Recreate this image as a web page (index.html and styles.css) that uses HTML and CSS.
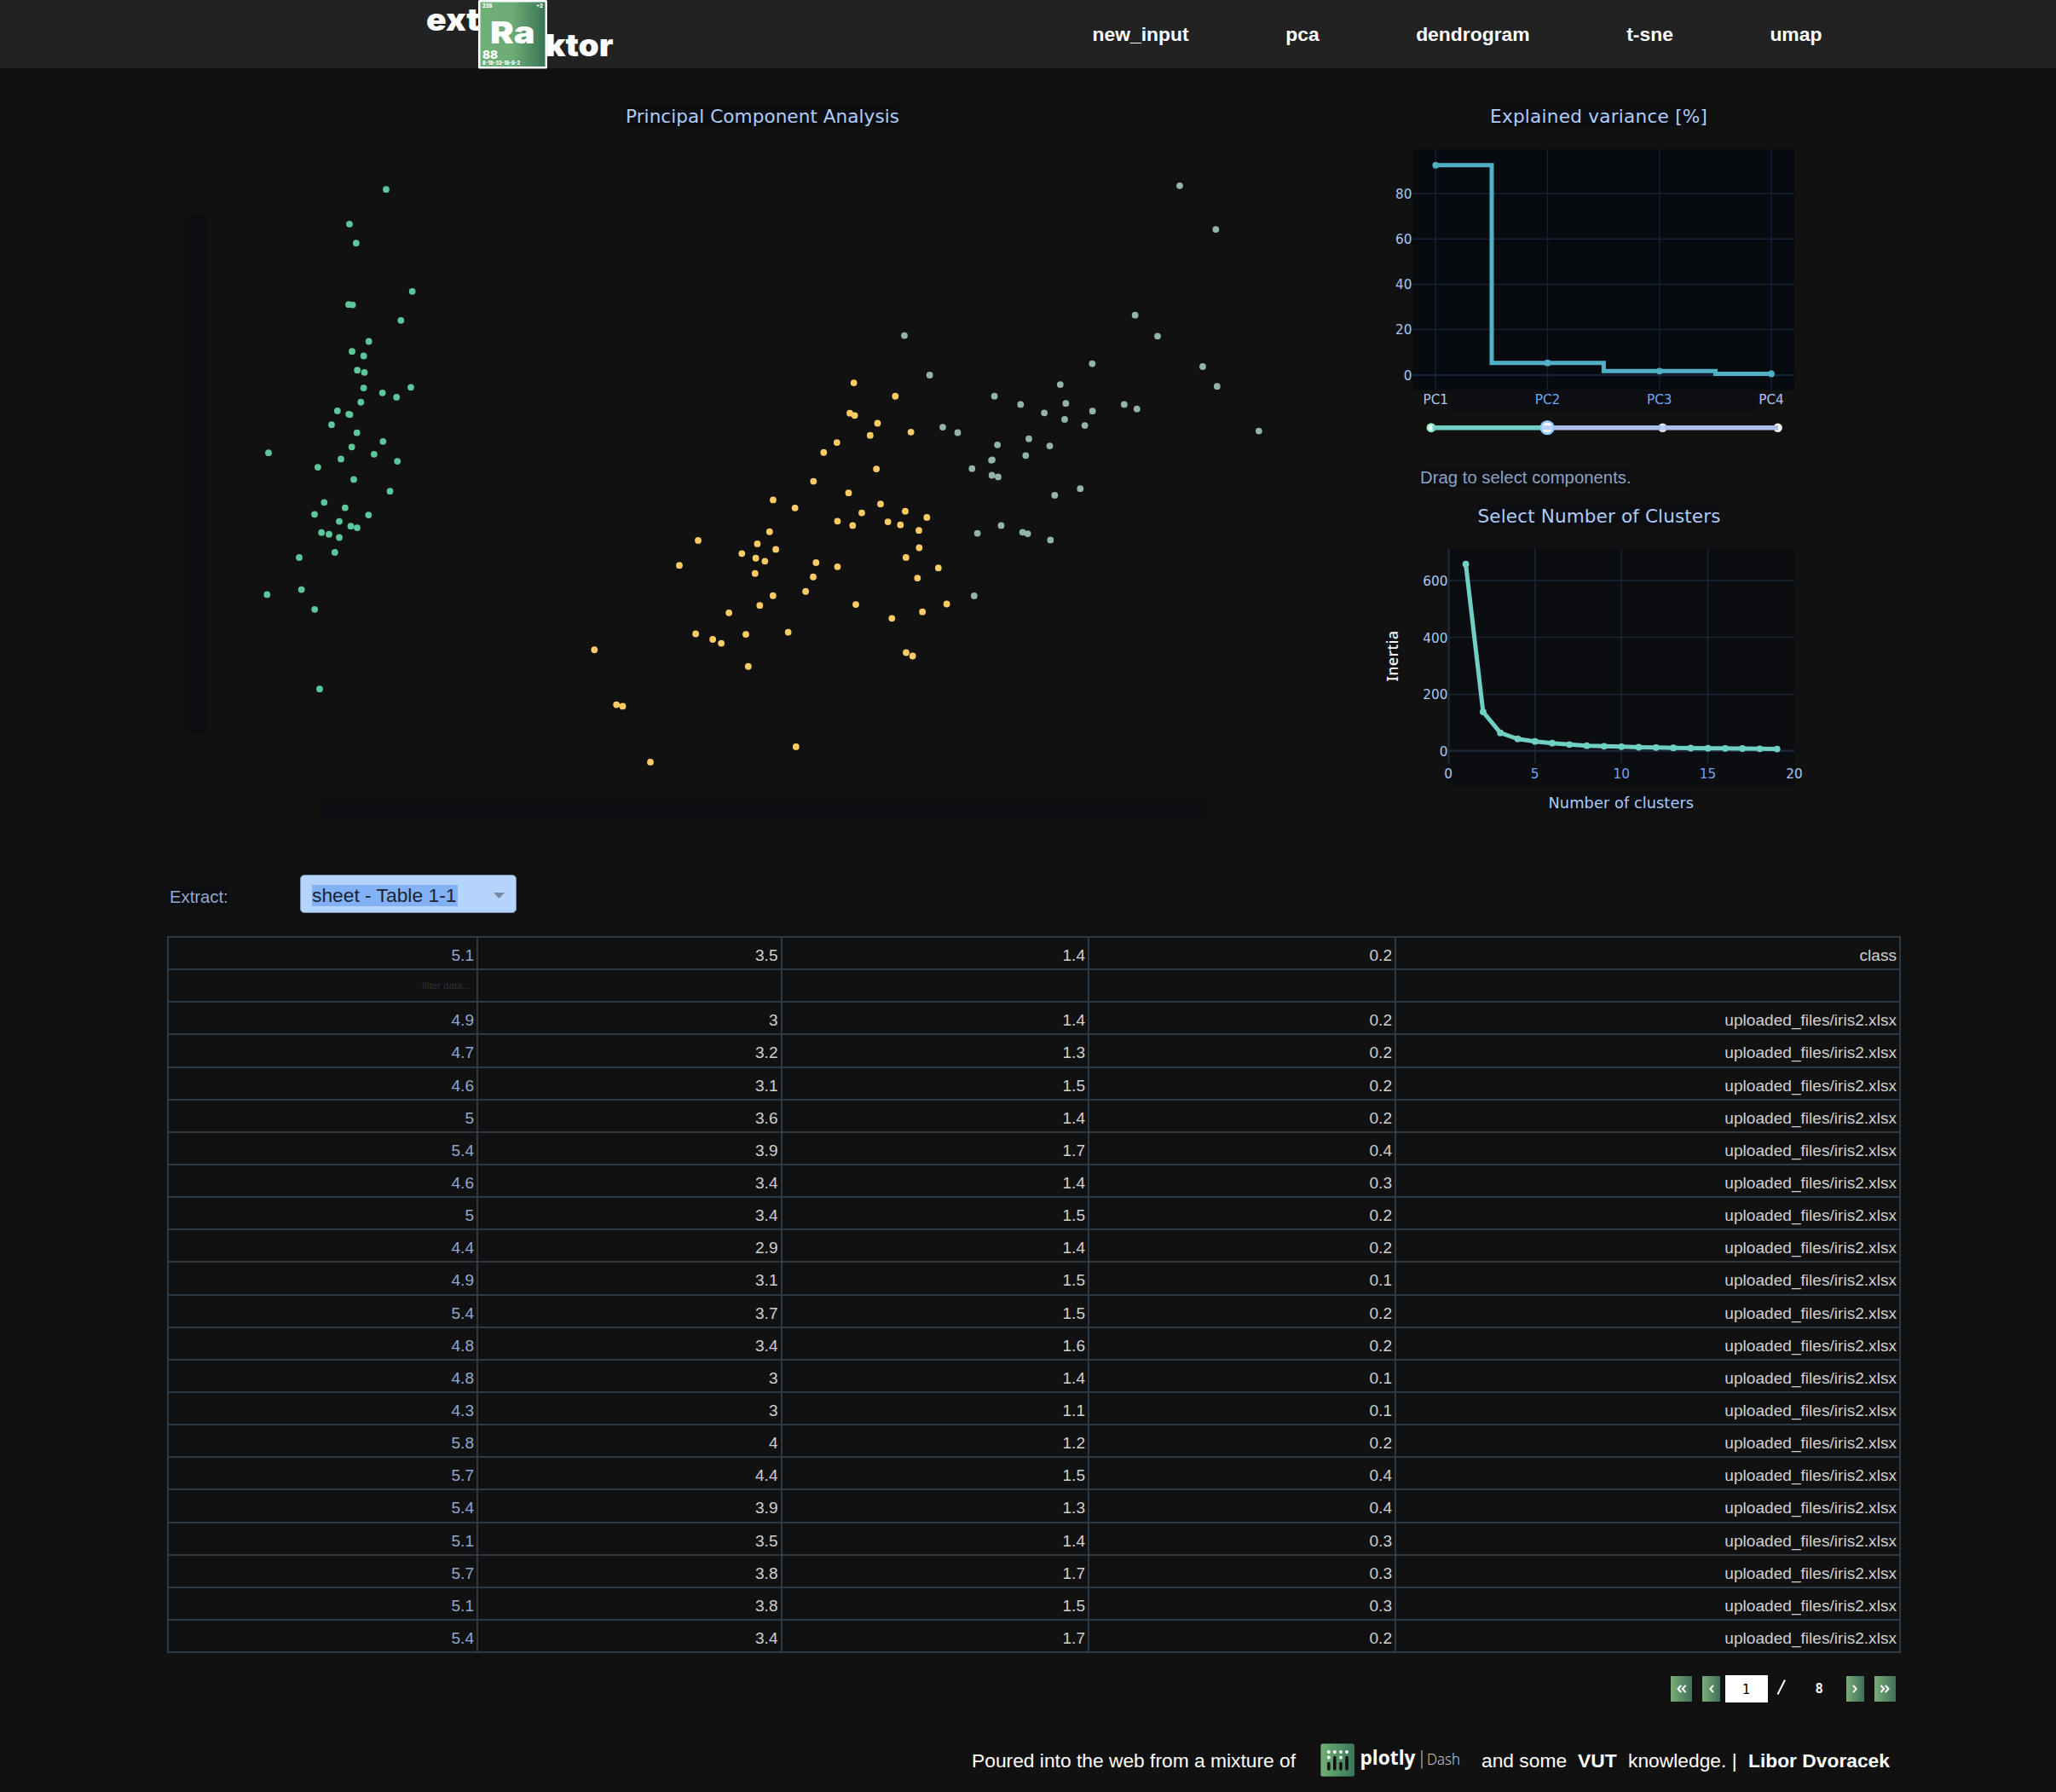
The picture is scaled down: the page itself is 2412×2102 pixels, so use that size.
FILE: index.html
```html
<!DOCTYPE html>
<html lang="en">
<head>
<meta charset="utf-8">
<title>extRaktor – pca</title>
<link rel="stylesheet" href="styles.css">
</head>
<body>
<header class="topbar">
  <svg class="brand" viewBox="496 0 228 80" width="228" height="80" role="img" aria-label="extRaktor">
    <defs>
      <linearGradient id="tile" x1="0" y1="0" x2="1" y2="0">
        <stop offset="0" stop-color="#70b078"/><stop offset=".5" stop-color="#6cab75"/><stop offset="1" stop-color="#3a7556"/>
      </linearGradient>
    </defs>
    <g class="brand-word">
      <text x="500" y="35.500" font-size="36.500" textLength="63" lengthAdjust="spacingAndGlyphs">ext</text>
      <text x="640" y="66" font-size="36" textLength="79.500" lengthAdjust="spacingAndGlyphs">ktor</text>
    </g>
    <rect x="561" y="0" width="81" height="80.500" rx="1.500" fill="#fff"/>
    <rect x="563.500" y="2.500" width="76" height="75.500" fill="url(#tile)"/>
    <g class="brand-word">
      <text x="575" y="50.700" font-size="36" textLength="52.500" lengthAdjust="spacingAndGlyphs">Ra</text>
      <text x="566" y="68.700" font-size="13" textLength="18" lengthAdjust="spacingAndGlyphs">88</text>
      <text x="566" y="75.600" font-size="6" textLength="44" lengthAdjust="spacingAndGlyphs">8-18-32-18-8-2</text>
      <text x="566" y="9.300" font-size="6" textLength="11.500" lengthAdjust="spacingAndGlyphs">226</text>
      <text x="629" y="9.300" font-size="6" textLength="8" lengthAdjust="spacingAndGlyphs">+2</text>
    </g>
  </svg>
  <nav class="menu">
    <a>new_input</a><a>pca</a><a>dendrogram</a><a>t-sne</a><a>umap</a>
  </nav>
</header>

<main>
  <section class="charts">
    <svg class="scatter" viewBox="200 100 1400 880" width="1400" height="880">
      <rect class="band" x="218" y="251" width="25" height="609"/>
      <rect class="band" x="374" y="938" width="1041" height="24"/>
      <rect class="band" x="735" y="123" width="320" height="26"/>
      <text class="title" x="734" y="143.700" textLength="321">Principal Component Analysis</text>
      <path class="dots c0" transform="translate(200 100) scale(.33333 .4847)" d="M759 252h0M630 336h0M653.500 382h0M851 499h0M627 530.500h0M641 531.500h0M811 569h0M698 620h0M639 644h0M680 655h0M657.500 689.500h0M682.500 695h0M680 732.500h0M746 744.500h0M795.500 755h0M846 731h0M670 767h0M587.500 788h0M627.500 796h0M631.500 797h0M567 821.500h0M656 841h0M748 862h0M638 875.500h0M716.500 893h0M345 889.500h0M600 904.500h0M798.500 910h0M518.500 924.500h0M645 954h0M772.500 982.500h0M541 1009.500h0M614.500 1022.500h0M507 1038.500h0M697 1040h0M594 1055.500h0M634.500 1067h0M657 1071h0M531.500 1082.500h0M558 1086.500h0M594 1094.500h0M578.500 1130.500h0M453 1143h0M461 1220.500h0M340 1232.500h0M507.500 1268.500h0M525 1461h0"/>
      <path class="dots c1" transform="translate(660 340) scale(.33333 .38265)" d="M1025 285h0M1171 326h0M1011 378h0M1028 385h0M1108.500 409h0M1082.500 446h0M1226 436h0M965.500 468h0M919 498.500h0M1104.500 549h0M883 587h0M1006.500 622.500h0M741 644h0M818 668.500h0M1119 656.500h0M1206 678.500h0M1053 683.500h0M1282 697.500h0M967.500 709h0M1021 722.500h0M1145 711h0M1189 720.500h0M1254 737.500h0M728.500 741.500h0M477 768h0M685.500 778.500h0M750.500 795.500h0M631 808.500h0M680 822.500h0M712 832h0M1255 790.500h0M1208.500 820.500h0M411 844.500h0M892 836h0M967.500 849h0M1322.500 852.500h0M677.500 869.500h0M882 880h0M1249 883.500h0M855.500 924.500h0M740.500 937.500h0M694 967.500h0M1032 964.500h0M1352 963h0M1266.500 987h0M585.500 990h0M1159 1007h0M794 1049.500h0M468.500 1054.500h0M645 1056h0M528.500 1071.500h0M558.500 1083.500h0M112 1103.500h0M1209 1112h0M1232 1122.500h0M653.500 1154.500h0M189.500 1271.500h0M211.500 1276.500h0M821.500 1400.500h0M309 1447.500h0"/>
      <path class="dots c2" transform="translate(1040 180) scale(.33333 .35714)" d="M1032 106h0M1159 249.500h0M875 531h0M63 598h0M954 600h0M724 690.500h0M1113 700h0M152 728h0M611.500 759h0M1163.500 765h0M380 797h0M472 824.500h0M631 821h0M836.500 824.500h0M881.500 839h0M555.500 852h0M725 846h0M627 873.500h0M698 893.500h0M198 899h0M250.500 917h0M1310.500 911.500h0M501 937h0M390.500 957h0M574.500 960.500h0M490 992h0M369.500 1007.500h0M372 1006h0M301 1035h0M371 1057h0M393 1062.500h0M682 1101h0M592 1122.500h0M403.500 1222h0M320 1247.500h0M479 1244h0M497 1249h0M577 1269.500h0M308.500 1453h0"/>
    </svg>

    <div class="side">
      <svg viewBox="1600 100 560 390" width="560" height="390">
        <rect class="band" x="1749" y="122.500" width="253.500" height="26"/>
        <text class="title" x="1748" y="143.700" textLength="255">Explained variance [%]</text>
        <rect x="1657" y="175" width="448.500" height="282.500" fill="#070a0e"/>
        <rect class="band" x="1702" y="457.500" width="359" height="25"/>
        <path class="grid-a" d="M1684.300 175V457M1815.500 175V457M1946.800 175V457M2078 175V457M1657 227H2105M1657 280.300H2105M1657 333.500H2105M1657 386.500H2105"/>
        <path class="grid-a thick" d="M1657 440H2105"/>
        <path class="line-a" d="M1684.300 193.800H1750V425.700H1881.400V435.300H2012.500V438.500H2078"/>
        <path class="dots mark-a" d="M1684.300 193.800h0M1815.500 425.700h0M1946.800 435.300h0M2078 438.500h0"/>
        <g class="tick end">
          <text x="1656.500" y="232.900">80</text><text x="1656.500" y="286.100">60</text><text x="1656.500" y="339.200">40</text><text x="1656.500" y="392.200">20</text><text x="1656.500" y="445.800">0</text>
        </g>
        <g class="tick mid">
          <text x="1684.300" y="473.700">PC1</text><text class="deep" x="1815.500" y="473.700">PC2</text><text class="deep" x="1946.800" y="473.700">PC3</text><text x="2078" y="473.700">PC4</text>
        </g>
      </svg>

      <svg viewBox="1600 490 560 40" width="560" height="40">
        <circle cx="1679" cy="501.700" r="4.200" fill="#fff" stroke="#8ff0c0" stroke-width="2.500"/>
        <circle cx="1950.500" cy="501.700" r="5.200" fill="#e6e8ee"/>
        <circle cx="2085.700" cy="501.700" r="5.200" fill="#f4f2f0"/>
        <path d="M1815 501.700H2086" stroke="#a9c1e8" stroke-width="5.600"/>
        <path d="M1680.500 501.700H1815" stroke="#70d0c4" stroke-width="5.600"/>
        <circle cx="1950.500" cy="501.700" r="2.600" fill="#b9d0f8"/>
        <circle cx="1815.200" cy="501.700" r="7.400" fill="#fff" stroke="#92caf9" stroke-width="2.500"/>
        <path d="M1809.500 501.700H1821" stroke="#b5d3fb" stroke-width="5.200"/>
      </svg>

      <p class="hint"><span>Drag to select components.</span></p>

      <svg viewBox="1600 580 560 400" width="560" height="400">
        <rect class="band" x="1734.500" y="591" width="283" height="26"/>
        <text class="title" x="1733.500" y="612.700" textLength="285">Select Number of Clusters</text>
        <rect x="1698" y="643.500" width="408" height="278" fill="#0b0d11"/>
        <path class="grid-b" d="M1800.700 644V896M1902.200 644V896M2003.500 644V896M1699 681H2105M1699 747.500H2105M1699 814.500H2105"/>
        <path class="grid-b thick" d="M1699.500 644V896M1699 880.700H2105"/>
        <polyline class="line-b" points="1719.600,661.700 1739.900,835 1760.200,859.700 1780.500,866.700 1800.800,869.700 1821,871.700 1841.300,873.300 1861.600,874.700 1881.900,875.300 1902.200,875.800 1922.500,876.500 1942.800,876.800 1963.100,877.200 1983.400,877.500 2003.700,877.700 2024,877.800 2044.200,878 2064.500,878.300 2084.800,878.600"/>
        <path class="dots mark-b" d="M1719.600 661.700h0M1739.900 835h0M1760.200 859.700h0M1780.500 866.700h0M1800.800 869.700h0M1821 871.700h0M1841.300 873.300h0M1861.600 874.700h0M1881.900 875.300h0M1902.200 875.800h0M1922.500 876.500h0M1942.800 876.800h0M1963.100 877.200h0M1983.400 877.500h0M2003.700 877.700h0M2024 877.800h0M2044.200 878h0M2064.500 878.300h0M2084.800 878.600h0"/>
        <g class="tick end">
          <text x="1698.500" y="687">600</text><text x="1698.500" y="753.500">400</text><text x="1698.500" y="820.200">200</text><text x="1698.500" y="887">0</text>
        </g>
        <g class="tick mid">
          <text x="1699" y="912.700">0</text><text class="deep" x="1800.700" y="912.700">5</text><text class="deep" x="1902.200" y="912.700">10</text><text class="deep" x="2003.500" y="912.700">15</text><text x="2105" y="912.700">20</text>
        </g>
        <rect class="band" x="1817.500" y="929" width="169.500" height="22"/>
        <text class="axis" x="1816.500" y="947.700" textLength="170.500">Number of clusters</text>
        <text class="axis inertia" transform="translate(1640 799.500) rotate(-90)" textLength="59.500">Inertia</text>
      </svg>
    </div>
  </section>

  <div class="extract">
    <label><span>Extract:</span></label>
    <div class="select">
      <span class="value">sheet - Table 1-1</span>
      <svg width="13" height="7" viewBox="0 0 13 7"><path d="M0 0h13L6.500 7z" fill="#75889f"/></svg>
    </div>
  </div>

  <section class="table">
    <b>5.1</b><i>3.5</i><i>1.4</i><i>0.2</i><i>class</i>
    <b class="filter"><span>filter data...</span></b><i></i><i></i><i></i><i></i>
    <b>4.9</b><i>3</i><i>1.4</i><i>0.2</i><i>uploaded_files/iris2.xlsx</i>
    <b>4.7</b><i>3.2</i><i>1.3</i><i>0.2</i><i>uploaded_files/iris2.xlsx</i>
    <b>4.6</b><i>3.1</i><i>1.5</i><i>0.2</i><i>uploaded_files/iris2.xlsx</i>
    <b>5</b><i>3.6</i><i>1.4</i><i>0.2</i><i>uploaded_files/iris2.xlsx</i>
    <b>5.4</b><i>3.9</i><i>1.7</i><i>0.4</i><i>uploaded_files/iris2.xlsx</i>
    <b>4.6</b><i>3.4</i><i>1.4</i><i>0.3</i><i>uploaded_files/iris2.xlsx</i>
    <b>5</b><i>3.4</i><i>1.5</i><i>0.2</i><i>uploaded_files/iris2.xlsx</i>
    <b>4.4</b><i>2.9</i><i>1.4</i><i>0.2</i><i>uploaded_files/iris2.xlsx</i>
    <b>4.9</b><i>3.1</i><i>1.5</i><i>0.1</i><i>uploaded_files/iris2.xlsx</i>
    <b>5.4</b><i>3.7</i><i>1.5</i><i>0.2</i><i>uploaded_files/iris2.xlsx</i>
    <b>4.8</b><i>3.4</i><i>1.6</i><i>0.2</i><i>uploaded_files/iris2.xlsx</i>
    <b>4.8</b><i>3</i><i>1.4</i><i>0.1</i><i>uploaded_files/iris2.xlsx</i>
    <b>4.3</b><i>3</i><i>1.1</i><i>0.1</i><i>uploaded_files/iris2.xlsx</i>
    <b>5.8</b><i>4</i><i>1.2</i><i>0.2</i><i>uploaded_files/iris2.xlsx</i>
    <b>5.7</b><i>4.4</i><i>1.5</i><i>0.4</i><i>uploaded_files/iris2.xlsx</i>
    <b>5.4</b><i>3.9</i><i>1.3</i><i>0.4</i><i>uploaded_files/iris2.xlsx</i>
    <b>5.1</b><i>3.5</i><i>1.4</i><i>0.3</i><i>uploaded_files/iris2.xlsx</i>
    <b>5.7</b><i>3.8</i><i>1.7</i><i>0.3</i><i>uploaded_files/iris2.xlsx</i>
    <b>5.1</b><i>3.8</i><i>1.5</i><i>0.3</i><i>uploaded_files/iris2.xlsx</i>
    <b>5.4</b><i>3.4</i><i>1.7</i><i>0.2</i><i>uploaded_files/iris2.xlsx</i>
  </section>

  <div class="pager">
    <button class="wide"><svg viewBox="0 0 12 10" width="12" height="10"><path d="M5.200 1L1.500 5l3.700 4M10.500 1L6.800 5l3.700 4"/></svg></button>
    <button class="prev"><svg viewBox="0 0 6 10" width="6" height="10"><path d="M5 1L1.300 5 5 9"/></svg></button>
    <span class="page">1</span>
    <span class="slash"><svg viewBox="0 0 12 20" width="12" height="20"><path d="M10 1.500L1.500 18.500"/></svg></span>
    <span class="total">8</span>
    <button class="next"><svg viewBox="0 0 6 10" width="6" height="10"><path d="M1 1l3.700 4L1 9"/></svg></button>
    <button class="wide"><svg viewBox="0 0 12 10" width="12" height="10"><path d="M1.500 1l3.700 4-3.700 4M6.800 1l3.700 4-3.700 4"/></svg></button>
  </div>
</main>

<footer class="foot">
  <span class="poured">Poured into the web from a mixture of</span>
  <svg class="plotly" viewBox="1549 2046 166 40" width="166" height="40" role="img" aria-label="plotly Dash">
    <defs><linearGradient id="pl" x1="0" y1="0" x2="1" y2="0"><stop offset="0" stop-color="#6fb174"/><stop offset="1" stop-color="#3a7658"/></linearGradient></defs>
    <rect x="1549.400" y="2046.300" width="39.600" height="38.400" rx="2.500" fill="url(#pl)"/>
    <path d="M1558.800 2056h0M1565.800 2056h0M1573 2056h0M1580 2056h0M1558.800 2062.500h0M1573 2062.500h0" stroke="#fff" stroke-width="4" stroke-linecap="round"/>
    <path d="M1558.800 2069.500v6.500M1565.800 2062.500v13.500M1573 2069.500v6.500M1580 2062.500v13.500" stroke="#111" stroke-width="3.600" stroke-linecap="round"/>
    <text class="pl-name" x="1595.500" y="2071" textLength="65" lengthAdjust="spacingAndGlyphs">plotly</text>
    <path d="M1668 2054v21.500" stroke="#aaa" stroke-width="1.300"/>
    <text class="pl-dash" x="1674" y="2070.500" textLength="39" lengthAdjust="spacingAndGlyphs">Dash</text>
  </svg>
  <span class="some">and some</span>
  <strong class="vut">VUT</strong>
  <span class="know">knowledge. |</span>
  <strong>Libor Dvoracek</strong>
</footer>
</body>
</html>
```

FILE: styles.css
```css
* { box-sizing: border-box; }
body {
  margin: 0;
  background: #111;
  color: #fff;
  font-family: "Liberation Sans", Arial, sans-serif;
}
svg { display: block; flex: none; }

.topbar {
  display: flex;
  height: 80px;
  padding-left: 496px;
  background: #222;
}
.brand { overflow: visible; }
.brand-word { font-family: Inter, sans-serif; font-weight: 900; fill: #fff; }
.menu {
  display: flex;
  gap: 113.500px;
  padding: 27px 0 0 557.500px;
  font-size: 22.900px;
  font-weight: bold;
  line-height: 26px;
}

.charts { display: flex; padding: 20px 0 0 200px; }
.band { fill: #0c0e12; }
.title, .tick, .axis { font-family: "DejaVu Sans", Verdana, sans-serif; }
.title { font-size: 21.600px; fill: #aecdf8; }
.tick { font-size: 15.300px; fill: #a9c7f0; }
.tick .deep { fill: #72a6ee; }
.end { text-anchor: end; }
.mid { text-anchor: middle; }
.axis { font-size: 17.800px; fill: #abccf8; }
.inertia { font-family: "Noto Sans", sans-serif; font-weight: 500; font-size: 18px; fill: #f4f7fa; }

.dots {
  fill: none;
  stroke-width: 7.800px;
  stroke-linecap: round;
  vector-effect: non-scaling-stroke;
}
.c0 { stroke: #5bc79b; }
.c1 { stroke: #fdcb64; }
.c2 { stroke: #93b5a7; }
.mark-a { stroke: #4fb0c6; }
.mark-b { stroke: #70d0c4; }
.grid-a, .grid-b { fill: none; stroke-width: 1.400px; }
.grid-a { stroke: #14213a; }
.grid-b { stroke: #1b283a; }
.thick { stroke-width: 2.600px; }
.line-a, .line-b { fill: none; stroke-width: 5px; }
.line-a { stroke: #4fb0c6; }
.line-b { stroke: #70d0c4; stroke-linejoin: round; }

.hint {
  height: 50px;
  margin: 0;
  padding: 19px 0 0 66px;
  font-size: 20.350px;
  line-height: 23px;
  color: #8ea3c0;
}
.hint span, .extract label span { background: #0c0e12; }

.extract {
  display: flex;
  height: 118px;
  padding: 46px 0 0 199px;
}
.extract label {
  width: 153px;
  padding-top: 14px;
  font-size: 20.300px;
  line-height: 24px;
  color: #93a9c9;
}
.select {
  display: flex;
  align-items: center;
  justify-content: space-between;
  width: 254px;
  height: 45px;
  padding: 3px 13px 0 13px;
  border: 1px solid #7c92ac;
  border-radius: 5px;
  background: #b5d4fb;
}
.value {
  padding-right: 2px;
  font-size: 22.800px;
  line-height: 25px;
  color: #1a2433;
  background: #82b1f6;
}

.table {
  display: grid;
  grid-template-columns: 363px 356.500px 360.500px 360px 592px;
  grid-auto-rows: 38.150px;
  width: 2034px;
  margin-left: 196px;
  border: solid #2e3946;
  border-width: 0 2px 2px 0;
  font-size: 19.100px;
}
.table b, .table i {
  padding: 10px 3px 0 0;
  border: solid #2e3946;
  border-width: 2px 0 0 2px;
  font-style: normal;
  font-weight: normal;
  line-height: 22px;
  text-align: right;
  color: #d0d0d0;
}
.table b { color: #8fa8cc; }
.table .filter { padding: 7px 7px 0 0; font-size: 11.500px; color: #2b3138; }

.pager {
  display: flex;
  align-items: center;
  height: 32px;
  margin: 26px 0 0 1960px;
  font-family: "DejaVu Sans Mono", monospace;
  font-size: 15.500px;
}
.pager button {
  display: flex;
  align-items: center;
  justify-content: center;
  width: 21px;
  height: 30px;
  padding: 0;
  border: 0;
  background: linear-gradient(90deg, #78ad76, #416f59);
}
.pager .wide { width: 25px; }
.pager path { fill: none; stroke: #fff; stroke-width: 2px; }
.prev { margin-left: 12px; }
.page {
  width: 50px;
  height: 32px;
  margin-left: 5.500px;
  line-height: 34px;
  text-align: center;
  color: #000;
  background: #fff;
}
.slash { margin: -4px 0 0 10px; }
.total { width: 10px; margin: 0 26px 0 34px; font-weight: bold; }
.next { margin-right: 12px; }

.foot {
  display: flex;
  align-items: center;
  height: 40px;
  margin: 48px 0 0 1140px;
  font-size: 22.800px;
  white-space: pre;
}
.foot > span, .foot > strong { margin-top: 1px; }
.poured { width: 409px; }
.some { margin-left: 23px; width: 113px; }
.vut { width: 59px; }
.know { width: 141px; }
.pl-name { font-family: "Open Sans", sans-serif; font-weight: 700; font-size: 23px; fill: #fff; }
.pl-dash { font-family: "Open Sans", sans-serif; font-weight: 300; font-size: 17.500px; fill: #ddd; }
```
